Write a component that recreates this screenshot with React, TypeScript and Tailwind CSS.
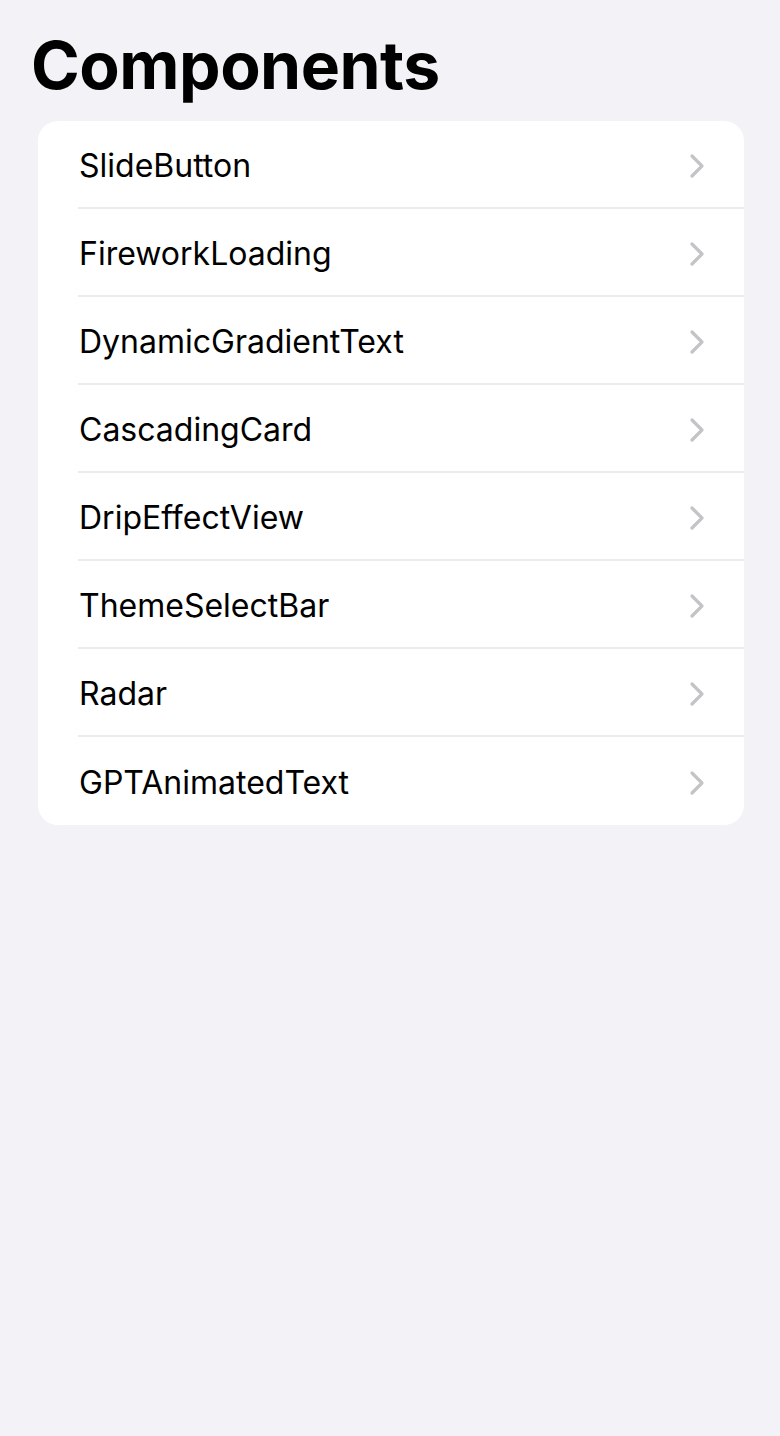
const items = [
  'SlideButton',
  'FireworkLoading',
  'DynamicGradientText',
  'CascadingCard',
  'DripEffectView',
  'ThemeSelectBar',
  'Radar',
  'GPTAnimatedText',
];

function Chevron() {
  return (
    <svg width="18" height="26" viewBox="0 0 18 26" fill="none" className="shrink-0">
      <path d="M4 3l10 10-10 10" stroke="#c4c4c7" strokeWidth="3.2" strokeLinecap="round" strokeLinejoin="round" />
    </svg>
  );
}

export default function App() {
  return (
    <main className="min-h-[1436px] w-full bg-[#f2f2f7] font-['Inter',sans-serif] text-black">
      <h1 className="pl-[31px] pt-[25px] text-[66px] font-bold leading-[80px] tracking-[-0.5px]">Components</h1>
      <ul className="ml-[38px] mr-[36px] mt-[16px] overflow-hidden rounded-[20px] bg-white">
        {items.map((name, i) => (
          <li key={name} className="pl-[40px]">
            <div
              className={`flex h-[88px] items-center justify-between pr-[38px] pt-[3px] ${
                i < items.length - 1 ? 'border-b-2 border-[#ececef]' : ''
              }`}
            >
              <span className="pl-px text-[32px]">{name}</span>
              <Chevron />
            </div>
          </li>
        ))}
      </ul>
    </main>
  );
}
